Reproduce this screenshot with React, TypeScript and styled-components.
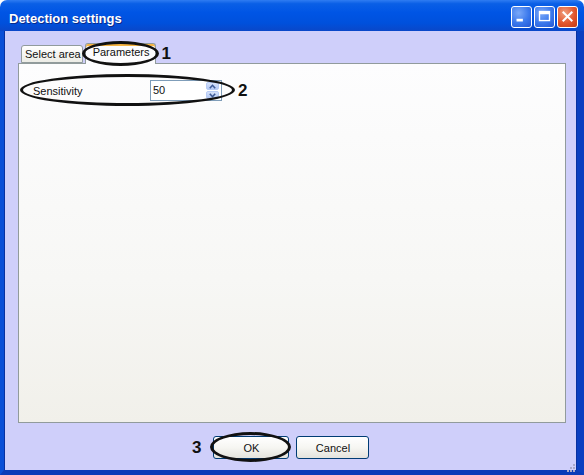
import React from 'react'
import styled, { createGlobalStyle, css } from 'styled-components'

const GlobalStyle = createGlobalStyle`
  html, body {
    margin: 0;
    padding: 0;
    background: #ffffff;
  }
  body {
    font-family: 'Liberation Sans', Arial, sans-serif;
  }
`

const App: React.FC = () => {
  return (
    <>
      <GlobalStyle />
      <Window>
        <TitleBar>
          <Title>Detection settings</Title>
          <Controls>
            <CtlButton aria-label="minimize">
              <svg width="21" height="21" viewBox="0 0 21 21">
                <rect x="5" y="13" width="7" height="3" fill="#fff" />
              </svg>
            </CtlButton>
            <CtlButton aria-label="maximize">
              <svg width="21" height="21" viewBox="0 0 21 21">
                <rect x="5" y="5" width="11" height="10" fill="none" stroke="#fff" strokeWidth="1.5" />
                <rect x="5" y="5" width="11" height="3" fill="#fff" />
              </svg>
            </CtlButton>
            <CtlButton $close aria-label="close">
              <svg width="21" height="21" viewBox="0 0 21 21">
                <path d="M6 6 L15 15 M15 6 L6 15" stroke="#fff" strokeWidth="2.2" strokeLinecap="square" />
              </svg>
            </CtlButton>
          </Controls>
        </TitleBar>
        <Body>
          <TabRow>
            <Tab>Select area</Tab>
            <Tab $active $circled>Parameters</Tab>
            <Marker $left={6}>1</Marker>
          </TabRow>
          <Panel>
            <FieldRow>
              <FieldLabel>Sensitivity</FieldLabel>
              <SpinBox>
                <SpinValue>50</SpinValue>
                <SpinButtons>
                  <SpinArrow>
                    <svg width="7" height="5" viewBox="0 0 7 5">
                      <path d="M0.8 4.2 L3.5 1.3 L6.2 4.2" fill="none" stroke="#3d5a96" strokeWidth="1.6" />
                    </svg>
                  </SpinArrow>
                  <SpinArrow>
                    <svg width="7" height="5" viewBox="0 0 7 5">
                      <path d="M0.8 0.8 L3.5 3.7 L6.2 0.8" fill="none" stroke="#3d5a96" strokeWidth="1.6" />
                    </svg>
                  </SpinArrow>
                </SpinButtons>
              </SpinBox>
              <Marker $left={16}>2</Marker>
            </FieldRow>
          </Panel>
          <ButtonRow>
            <Marker $right={12}>3</Marker>
            <PushButton $circled>OK</PushButton>
            <PushButton>Cancel</PushButton>
          </ButtonRow>
          <Grip>
            <svg width="10" height="10" viewBox="0 0 10 10">
              {[
                [7, 1],
                [4, 4],
                [7, 4],
                [1, 7],
                [4, 7],
                [7, 7],
              ].map(([x, y]) => (
                <rect key={`${x}-${y}`} x={x} y={y} width="2" height="2" fill="#a9a9c9" />
              ))}
            </svg>
          </Grip>
        </Body>
      </Window>
    </>
  )
}

export default App

const ellipse = css`
  position: relative;
  &::after {
    content: '';
    position: absolute;
    border: 3px solid #111;
    border-radius: 50%;
    pointer-events: none;
  }
`

const Window = styled.div`
  width: 584px;
  height: 475px;
  display: flex;
  flex-direction: column;
  overflow: hidden;
`

const TitleBar = styled.div`
  height: 31px;
  flex-shrink: 0;
  display: flex;
  align-items: center;
  justify-content: space-between;
  padding: 0 6px 0 9px;
  border-radius: 7px 7px 0 0;
  background: linear-gradient(
    #2f7cf2 0%,
    #0a5fe6 12%,
    #0055e5 40%,
    #0050dc 75%,
    #0a47c8 100%
  );
`

const Title = styled.span`
  color: #ffffff;
  font-weight: bold;
  font-size: 13px;
  margin-top: 5px;
  text-shadow: 1px 1px 0 #0a2a8a;
`

const Controls = styled.div`
  display: flex;
  gap: 2px;
  margin-top: 2px;
`

const CtlButton = styled.div<{ $close?: boolean }>`
  width: 21px;
  height: 22px;
  border: 1px solid #ffffff;
  border-radius: 3px;
  box-sizing: border-box;
  display: flex;
  align-items: center;
  justify-content: center;
  overflow: hidden;
  background: ${({ $close }) =>
    $close
      ? 'radial-gradient(circle at 35% 30%, #f0a080, #e2552c 55%, #c23a14)'
      : 'radial-gradient(circle at 35% 30%, #7aa8f8, #3a78ec 55%, #2457d4)'};
  svg {
    width: 19px;
    height: 19px;
  }
`

const Body = styled.div`
  flex: 1;
  position: relative;
  display: flex;
  flex-direction: column;
  background: #cfcffa;
  border-left: 4px solid #0a4fd6;
  border-right: 7px solid #0a3fc0;
  border-bottom: 5px solid #0a3cb8;
  box-shadow: inset 1px 0 0 #0831a0, inset -1px 0 0 #0831a0;
  padding: 12px 11px 0 14px;
`

const TabRow = styled.div`
  display: flex;
  align-items: flex-end;
  height: 20px;
  padding-left: 3px;
  position: relative;
  z-index: 1;
`

const Tab = styled.div<{ $active?: boolean; $circled?: boolean }>`
  font-size: 11px;
  color: #111;
  box-sizing: border-box;
  background: ${({ $active }) => ($active ? '#fcfcfe' : 'linear-gradient(#ffffff, #ececE6)')};
  border: 1px solid #919b9c;
  border-bottom: ${({ $active }) => ($active ? 'none' : '1px solid #919b9c')};
  border-radius: 3px 3px 0 0;
  height: ${({ $active }) => ($active ? '21px' : '18px')};
  padding: ${({ $active }) => ($active ? '2px 5px 0 7px' : '2px 1px 0 3px')};
  margin-bottom: ${({ $active }) => ($active ? '-1px' : '0')};
  margin-left: ${({ $active }) => ($active ? '2px' : '0')};
  box-shadow: ${({ $active }) => ($active ? 'inset 0 2px 0 #f6b443' : 'none')};
  ${({ $circled }) =>
    $circled &&
    css`
      ${ellipse}
      &::after {
        top: -3px;
        bottom: -2px;
        left: -4px;
        right: -4px;
      }
    `}
`

const Marker = styled.span<{ $left?: number; $right?: number }>`
  font-size: 17px;
  font-weight: bold;
  color: #111;
  line-height: 1;
  margin-left: ${({ $left }) => $left ?? 0}px;
  margin-right: ${({ $right }) => $right ?? 0}px;
  align-self: center;
`

const Panel = styled.div`
  height: 360px;
  box-sizing: border-box;
  border: 1px solid #919b9c;
  background: linear-gradient(#fdfdfe 0%, #f7f7f5 60%, #f1f0ea 100%);
  padding: 16px 0 0 4px;
`

const FieldRow = styled.div`
  display: flex;
  align-items: stretch;
  height: 21px;
`

const FieldLabel = styled.div`
  width: 127px;
  box-sizing: border-box;
  padding-left: 10px;
  font-size: 11px;
  color: #111;
  display: flex;
  align-items: center;
  ${ellipse}
  &::after {
    top: -6px;
    bottom: -5px;
    left: -3px;
    right: -85px;
  }
`

const SpinBox = styled.div`
  width: 72px;
  box-sizing: border-box;
  border: 1px solid #7f9db9;
  background: #ffffff;
  display: flex;
  align-items: stretch;
`

const SpinValue = styled.div`
  flex: 1;
  font-size: 11px;
  color: #111;
  padding: 3px 0 0 2px;
`

const SpinButtons = styled.div`
  width: 15px;
  display: flex;
  flex-direction: column;
  gap: 1px;
  padding: 1px 2px 1px 0;
  box-sizing: border-box;
`

const SpinArrow = styled.div`
  flex: 1;
  display: flex;
  align-items: center;
  justify-content: center;
  border-radius: 2px;
  background: linear-gradient(#d6e2fa, #b3c8f4);
  border: 1px solid #b7cbf5;
`

const ButtonRow = styled.div`
  display: flex;
  align-items: center;
  margin-top: 13px;
  padding-left: 174px;
`

const PushButton = styled.div<{ $circled?: boolean }>`
  width: 76px;
  height: 23px;
  box-sizing: border-box;
  border: 1px solid #003c74;
  border-radius: 3px;
  background: linear-gradient(#ffffff 0%, #f6f6f2 50%, #e4e3dc 100%);
  font-size: 11px;
  color: #111;
  display: flex;
  align-items: center;
  justify-content: center;
  & + & {
    margin-left: 7px;
    width: 73px;
  }
  ${({ $circled }) =>
    $circled &&
    css`
      ${ellipse}
      &::after {
        top: -5px;
        bottom: -4px;
        left: -4px;
        right: -3px;
      }
    `}
`

const Grip = styled.div`
  position: absolute;
  right: 1px;
  bottom: 1px;
  width: 10px;
  height: 10px;
`
